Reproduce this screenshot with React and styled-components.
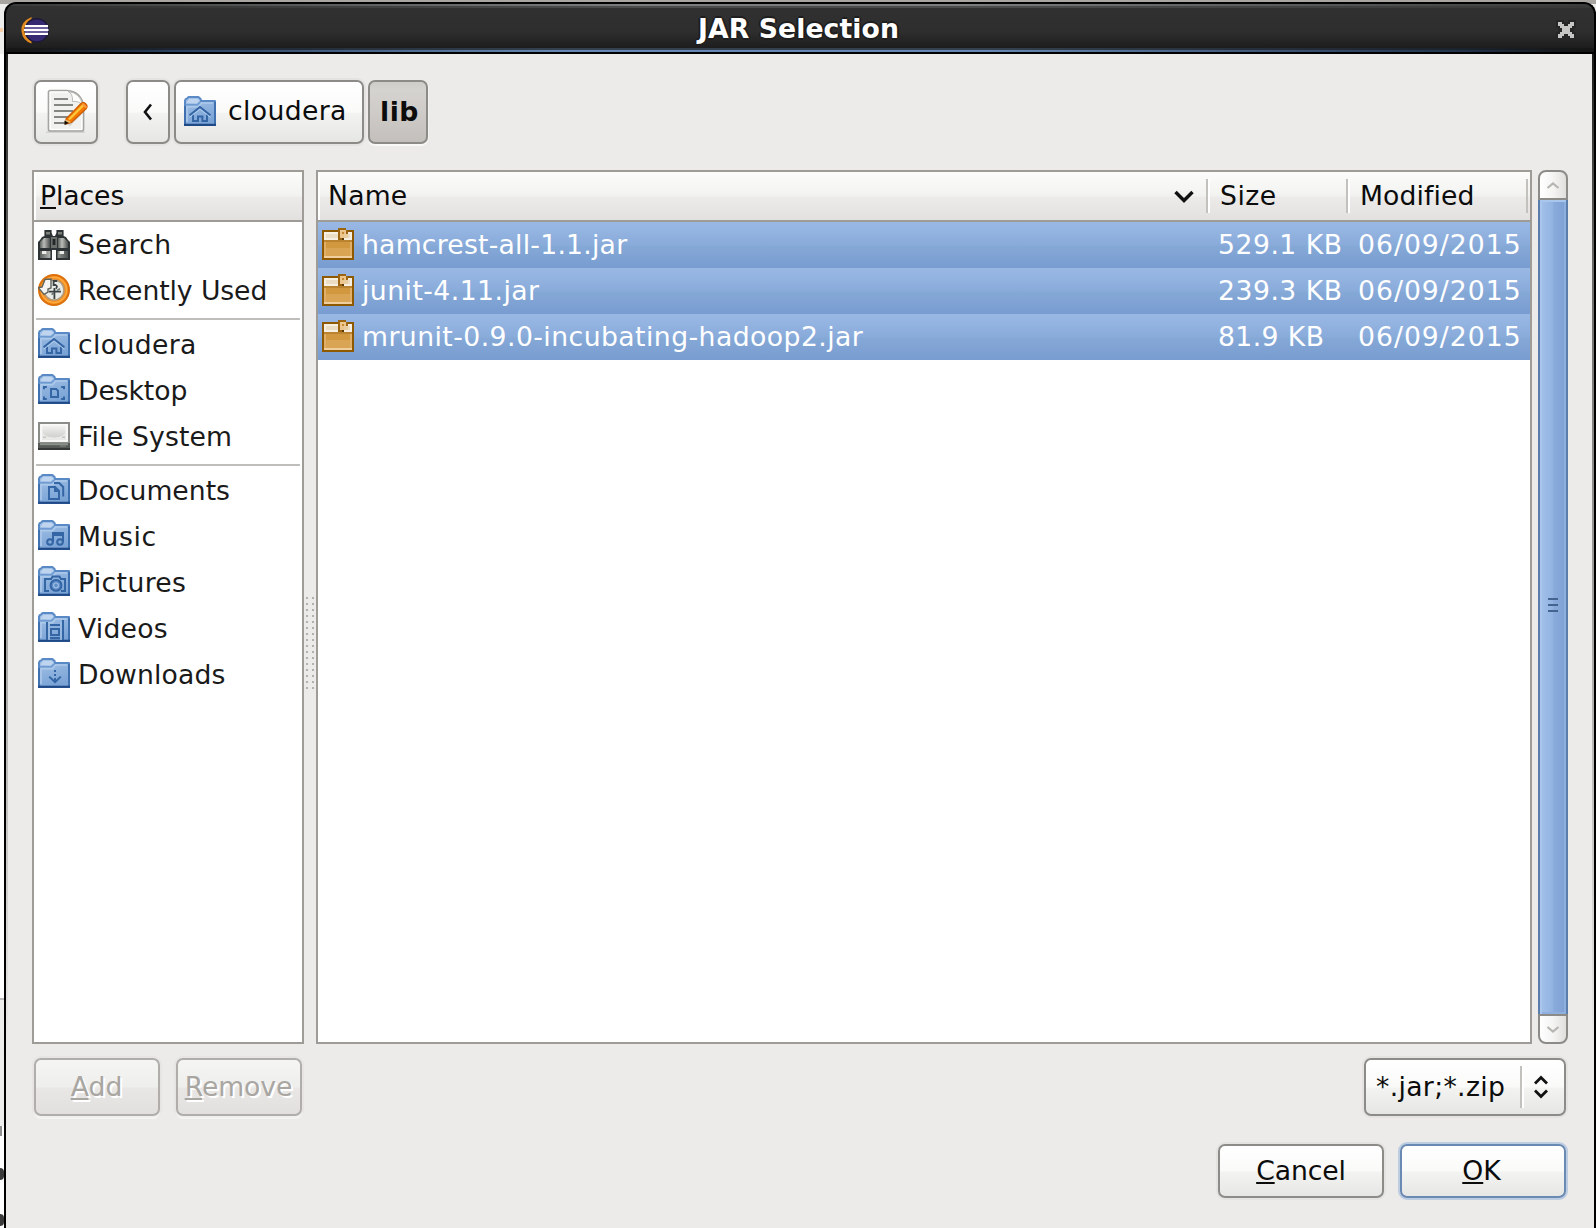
import React from 'react';
import styled, { createGlobalStyle, css } from 'styled-components';

const GlobalStyle = createGlobalStyle`
  * { box-sizing: border-box; }
  body { margin: 0; overflow: hidden; background: #fff; }
`;

const Screen = styled.div`
  display: flex;
  width: 1596px;
  height: 1228px;
  padding-top: 2px;
  overflow: hidden;
  font-family: "DejaVu Sans", sans-serif;
  font-size: 26.67px;
  color: #0c0c0c;
  background: linear-gradient(#a8a5a1 0 4px, #ededec 4px 54px, #fff 54px);
`;

/* sliver of the window behind the dialog */
const Behind = styled.div`
  flex: none;
  width: 4px;
  display: flex;
  flex-direction: column;
  align-items: flex-start;
  padding-top: 26px;
`;
const BehindMark = styled.div`
  width: ${p => p.$w || 4}px;
  height: ${p => p.$h}px;
  margin-top: ${p => p.$gap || 0}px;
  background: ${p => p.$color};
  border-top: ${p => (p.$line ? `2px solid ${p.$line}` : 'none')};
  border-radius: ${p => p.$r || '0'};
`;

const Dialog = styled.div`
  flex: 1;
  display: flex;
  flex-direction: column;
  border: solid #000;
  border-width: 2px 2px 0 2px;
  border-radius: 12px 12px 0 0;
  background: #000;
  overflow: hidden;
`;

const TitleBar = styled.header`
  flex: none;
  height: 50px;
  display: grid;
  grid-template-columns: 60px 1fr 60px;
  align-items: center;
  background:
    linear-gradient(90deg, #161616 1%, #2a3f5c 10%, #6788b4 35%, #6788b4 62%, #22324a 92%, #161616 99%) 0 46px / 100% 2px no-repeat,
    linear-gradient(90deg, #161616 1%, #1b2430 10%, #34404f 35%, #34404f 62%, #1a222c 92%, #161616 99%) 0 44px / 100% 2px no-repeat,
    linear-gradient(#000, #000) 0 48px / 100% 2px no-repeat,
    linear-gradient(90deg, #3a3a3a, #7b7d7e 40%, #7b7d7e 60%, #3a3a3a) 0 0 / 100% 2px no-repeat,
    linear-gradient(90deg, #303030, #4b4c4c 40%, #4b4c4c 60%, #383838) 0 2px / 100% 2px no-repeat,
    linear-gradient(#313131 0, #2e2e2e 55%, #171717 100%);
`;
const TitleText = styled.h1`
  margin: 0;
  padding: 0 3px 1px 0;
  font-size: 26.67px;
  line-height: 40px;
  font-weight: bold;
  letter-spacing: 0.1px;
  text-align: center;
  color: #fff;
  text-shadow: 2px 0 #1e1e1e, -2px 0 #1e1e1e, 0 2px #1e1e1e, 0 -2px #1e1e1e;
`;
const TitleIcon = styled.span`
  display: flex;
  padding-left: 14px;
  margin-top: 3px;
`;
const CloseButton = styled.button`
  display: flex;
  border: 0;
  padding: 0;
  background: none;
  margin: 2px 0 0 22px;
`;

const Body = styled.main`
  flex: 1;
  display: flex;
  flex-direction: column;
  padding: 26px 26px 0;
  background:
    linear-gradient(#1c1c1b, #6b6a69 18%, #a9a8a6 50%, #ecebe9 85%) 0 0 / 2px 100% no-repeat,
    linear-gradient(#1c1c1b, #6b6a69 18%, #a9a8a6 50%, #ecebe9 85%) 100% 0 / 2px 100% no-repeat,
    #ecebe9;
`;

const Toolbar = styled.nav`
  display: flex;
  height: 64px;
  padding-left: 2px;
  gap: 28px;
`;
const PathBar = styled.div`
  display: flex;
  gap: 4px;
`;

const Button = styled.button`
  flex: none;
  display: flex;
  align-items: center;
  justify-content: ${p => (p.$start ? 'flex-start' : 'center')};
  width: ${p => p.$w}px;
  height: ${p => p.$h || 64}px;
  padding: 0 ${p => (p.$start ? 8 : 0)}px;
  border: 2px solid #8c8b88;
  border-radius: 7px;
  font: inherit;
  color: #0c0c0c;
  background: linear-gradient(#ffffff, #fafaf9 50%, #f3f3f1 52%, #e6e6e4);
  box-shadow: 0 0 0 2px rgba(0, 0, 0, 0.03);
  ${p => p.$pressed && css`
    font-weight: bold;
    background: linear-gradient(#cfcdca, #d5d3d0 14%, #cecbc8 50%, #c3c0bc);
    box-shadow: 0 2px 0 #f8f8f7, 1px 0 0 #f4f4f3;
  `}
  ${p => p.$default && css`
    padding-right: 3px;
    border-color: #6a8ab4;
    box-shadow: 0 0 0 2px #bccde2;
  `}
  &:disabled {
    padding-right: 1px;
    color: #a9a6a2;
    border-color: #b0adaa;
    background: linear-gradient(#f5f5f4, #eeeeed 50%, #e8e7e6 52%, #e1e0de);
    box-shadow: 0 0 0 2px rgba(0, 0, 0, 0.025), 0 3px 0 #f6f6f5;
    text-shadow: 2px 2px 0 #fff;
  }
`;

const Label = styled.span`
  line-height: 32px;
  white-space: pre;
  letter-spacing: ${p => p.$ls || 0}px;
  margin-left: ${p => p.$gap || 0}px;
  margin-top: ${p => p.$drop || 0}px;
`;
const Mnemonic = styled.span`
  text-decoration: underline;
  text-decoration-thickness: 2px;
  text-underline-offset: 2px;
  text-decoration-skip-ink: none;
`;

const Panels = styled.div`
  display: grid;
  grid-template-columns: 272px 12px 1216px 6px 30px;
  height: 874px;
  margin-top: 26px;
`;
const Panel = styled.section`
  border: 2px solid #9f9c98;
  background: #fff;
  overflow: hidden;
`;
const headerFill = css`
  height: 50px;
  border-bottom: 2px solid #9f9c98;
  background:
    linear-gradient(#fff, #fff) 0 0 / 2px 100% no-repeat,
    linear-gradient(#fcfdfb, #f2f2f1 50%, #ecebea 52%, #e2e1df);
`;
const PlacesHeader = styled.div`
  ${headerFill}
  display: flex;
  align-items: center;
  padding-left: 6px;
`;
const PlaceRow = styled.div`
  display: flex;
  align-items: flex-start;
  height: 46px;
  padding: 6px 0 0 4px;
  color: #1a1a1a;
`;
const Separator = styled.hr`
  height: 8px;
  margin: 0 2px;
  border: 0;
  background: linear-gradient(transparent 4px, #bfbeba 4px 6px, transparent 6px);
`;

const Splitter = styled.div`
  align-self: center;
  justify-self: center;
  width: 8px;
  height: 96px;
  margin: 0 0 -76px 0;
  background:
    conic-gradient(from 0deg at 2px 2px, transparent 75%, #b3b1ae 0) 0 0 / 6px 6px;
`;

const columns = css`
  display: grid;
  grid-template-columns: 890px 140px 180px;
`;
const ListHeader = styled.div`
  ${headerFill}
  ${columns}
  align-items: center;
`;
const HeaderCell = styled.div`
  display: flex;
  align-items: center;
  justify-content: space-between;
  height: 34px;
  padding: 0 12px 0 ${p => p.$pad}px;
  border-right: 2px solid #c3c1be;
  border-left: ${p => (p.$first ? 'none' : '2px solid #fff')};
`;
const FileRow = styled.div`
  ${columns}
  height: 46px;
  color: #fff;
  background: linear-gradient(#9ab8e4, #8aacdb 48%, #84a8d6 54%, #799cd1);
`;
const FileCell = styled.div`
  display: flex;
  align-items: flex-start;
  padding: 6px 0 0 ${p => p.$pad}px;
`;

const ScrollBar = styled.div`
  grid-column: 5;
  display: flex;
  flex-direction: column;
`;
const Stepper = styled.button`
  flex: none;
  display: flex;
  align-items: center;
  justify-content: center;
  height: 30px;
  padding: 0;
  border: 2px solid #8c8b88;
  border-radius: ${p => (p.$down ? '0 0 8px 8px' : '8px 8px 0 0')};
  background: linear-gradient(90deg, #fff, #f4f4f3 50%, #e0dfdd);
`;
const Thumb = styled.div`
  flex: 1;
  display: flex;
  flex-direction: column;
  align-items: center;
  justify-content: center;
  gap: 4px;
  padding-bottom: 4px;
  border: solid #5b7dac;
  border-width: 0 2px;
  box-shadow: inset 2px 2px 0 #a9c6ec, inset -2px -2px 0 #8fb0de;
  background: linear-gradient(90deg, #a3c1ea, #92b3e1 50%, #8aacdc 52%, #7d9fd2);
`;
const ThumbLine = styled.i`
  width: 10px;
  height: 2px;
  background: #44638f;
`;

const Controls = styled.div`
  display: flex;
  justify-content: space-between;
  height: 58px;
  margin-top: 14px;
  padding: 0 2px;
`;
const Pair = styled.div`
  display: flex;
  gap: 16px;
`;
const Combo = styled(Button)`
  justify-content: flex-start;
  padding: 0 0 0 10px;
`;
const ComboArrows = styled.span`
  display: flex;
  align-items: center;
  height: 42px;
  margin-left: auto;
  padding: 0 16px 0 12px;
  border-left: 2px solid #c3c1be;
  box-shadow: inset 2px 0 0 #fff;
`;
const Actions = styled.footer`
  display: flex;
  justify-content: flex-end;
  gap: 16px;
  margin-top: 28px;
  padding-right: 2px;
`;
const Glyph = styled.svg`
  flex: none;
  display: block;
`;

const ink = '#3465a4';
const emblems = {
  home: (
    <g fill="none" stroke={ink} strokeWidth="1">
      <path d="M4.500 9.200v3.300H7v-2.200h2.200v2.200h2.300V9.200" />
      <path d="M2.800 9.600 8 5.500l5.200 4.100" />
      <path d="M2.800 10.600 8 6.600l5.200 4" stroke="#b3cdec" strokeWidth=".5" />
    </g>
  ),
  desktop: (
    <g fill="none" stroke={ink} strokeWidth="1">
      <path d="M6.500 7.500h2.600l.9.900v3.100H6.500z" />
      <path d="M3 7.600V6.500h1.400M11.600 6.500H13v1.100M3 11.200v1.300h1.400M11.600 12.500H13v-1.300" />
    </g>
  ),
  documents: (
    <g fill="none" stroke={ink} strokeWidth="1">
      <path d="M5.500 6.500h3l2 2v4h-5z" />
      <path d="M8.500 6.200v2.300h2M8 4.500h2.600l2 2v4.800" />
    </g>
  ),
  music: (
    <g fill="none" stroke={ink} strokeWidth="1">
      <path d="M7.500 11V6.500h5V11M7.500 7.500h5" />
      <circle cx="6" cy="11" r="1.400" />
      <circle cx="11" cy="11" r="1.400" />
    </g>
  ),
  pictures: (
    <g fill="none" stroke={ink} strokeWidth="1">
      <path d="M5.500 12.500h-2v-6h3l.8-1.200h3.400l.8 1.200h2v6h-2" />
      <circle cx="9" cy="9.700" r="2.700" fill="#5f8dc8" />
      <circle cx="9" cy="9.700" r="1.200" stroke="#9dbde5" strokeWidth=".6" />
    </g>
  ),
  videos: (
    <g fill="none" stroke={ink} strokeWidth="1">
      <path d="M4.500 5v9M12.500 4v10M6 6.500h5M6.500 8.500h4v3h-4zM6 13h5" />
      <path d="M5.500 5v9M11.500 5v9" stroke="#a5c3e7" strokeWidth=".6" />
    </g>
  ),
  downloads: (
    <g fill="none" stroke={ink} strokeWidth="1">
      <path d="M8.500 6v4" strokeDasharray="1 1" />
      <path d="M5.600 9.300l2.900 2.800 2.900-2.800M8.500 10v2" />
    </g>
  ),
};

const FolderIcon = ({ kind }) => (
  <Glyph width="32" height="32" viewBox="0 0 16 16">
    <defs>
      <linearGradient id={`fold-${kind}`} x1="0" y1="0" x2="0.3" y2="1">
        <stop offset="0" stopColor="#a9c6e9" />
        <stop offset="0.500" stopColor="#8fb3de" />
        <stop offset="1" stopColor="#7ba4d6" />
      </linearGradient>
    </defs>
    <path d="M.5 5V2.300Q.6 1.500 1.500 1.300L2.300.5H7.200L8.300 1.500 8.500 2.500H15.500V14.500H.5z" fill={`url(#fold-${kind})`} stroke="#5a8ac6" strokeLinejoin="round" />
    <path d="M1.300 3.500 2.500 1.500h4.300l1 .7-1.500 1.500z" fill="#bfd4ee" />
    <path d="M1 4.400h5.600L8.200 3" stroke="#6f9bd2" strokeWidth=".8" fill="none" />
    <path d="M1.500 13V5.400h5.800l1.500-1.900h5.700" stroke="#adc9ea" fill="none" strokeWidth=".8" />
    <path d="M.5 5v9M15.500 3v11" stroke="#3f70b0" />
    <path d="M0 14.400h16" stroke="#204a87" strokeWidth="1.100" />
    {emblems[kind]}
  </Glyph>
);

const BinocularsIcon = () => (
  <Glyph width="32" height="32" viewBox="0 0 16 16">
    <defs>
      <linearGradient id="barrel" x1="0" x2="1">
        <stop offset="0" stopColor="#5d615e" />
        <stop offset=".4" stopColor="#babcb8" />
        <stop offset="1" stopColor="#4b4f4d" />
      </linearGradient>
    </defs>
    <path d="M3.200 1h3.600v1.500L7.500 4h1l.7-1.500V1h3.600v3l1.200.5 1 1.500 1 1v9H9v-5H7v5H0V7l1-1 1-1.500L3.200 4z" fill="#2e3436" />
    <path d="M1 7 3 5h3v5H1z" fill="url(#barrel)" />
    <path d="M10 5h3l2 2v3h-5z" fill="url(#barrel)" />
    <path d="M6.500 4.500h3V10h-3z" fill="#6b706c" />
    <path d="M7.300 5.500h1.400v3H7.300z" fill="#232829" />
    <path d="M4 2h2v1.200H4zM10 2h2v1.200h-2z" fill="#7c807b" />
    <path d="M1 11.500h5.200V15H1zM9.800 11.500H15V15H9.800z" fill="url(#barrel)" />
    <path d="M2 11.500h2.200V13H2zM10.800 11.500H13V13h-2.200z" fill="#ecedea" />
    <path d="M7 11.500h2V16H7z" fill="#fff" />
  </Glyph>
);

const RecentIcon = () => (
  <Glyph width="32" height="32" viewBox="0 0 16 16">
    <circle cx="8" cy="8" r="7.500" fill="#f58c16" stroke="#dc700d" />
    <circle cx="8" cy="8" r="6.300" fill="none" stroke="#fca83f" strokeWidth=".8" />
    <circle cx="8" cy="8" r="5" fill="#e9ebe7" stroke="#b39a7c" strokeWidth=".8" />
    <path d="M3.500 2.700 6.500 2.500V7L5 7.500V9L3 10.200.2 6.800l1.800-.3z" fill="#f4f5f2" stroke="#5f635d" strokeWidth=".7" />
    <path d="M9.600 3.500H7.800v2h1q1.200.5.200 1.800M8.200 7v5.500M5.500 8.800h6" stroke="#3b4042" strokeWidth=".9" fill="none" />
    <path d="M9.500 8.300l1.500-1M6.800 10.300l1.200-1" stroke="#6c706c" strokeWidth=".8" fill="none" />
  </Glyph>
);

const DriveIcon = () => (
  <Glyph width="32" height="32" viewBox="0 0 16 16">
    <defs>
      <linearGradient id="plate" x1="0" y1="0" x2="0" y2="1">
        <stop offset="0" stopColor="#f0f0ef" />
        <stop offset="1" stopColor="#e6e6e4" />
      </linearGradient>
      <linearGradient id="disc" x1="0" y1="0" x2="0" y2="1">
        <stop offset="0" stopColor="#f2f2f1" />
        <stop offset="1" stopColor="#cfd1cc" />
      </linearGradient>
    </defs>
    <path d="M.5 1.500h15v10H.5z" fill="url(#plate)" stroke="#8b8d88" />
    <path d="M1.500 2.500h13v8h-13z" fill="none" stroke="#fbfbfa" strokeWidth=".8" />
    <path d="M2.300 6C2.500 3.500 4 2.800 8 2.800s5.500.7 5.700 3.200C13 9.600 3 9.600 2.300 6z" fill="url(#disc)" />
    <path d="M2.500 8.600h1.500M12 8.600h1.500" stroke="#c3c5c0" strokeWidth=".8" />
    <path d="M0 11.500h16V15H0z" fill="#555a57" />
    <path d="M1 11.600h14v1H1z" fill="#8d918c" />
    <path d="M0 14h16v1H0z" fill="#333836" />
    <path d="M11 12.500h3v1h-3z" fill="#6f7470" />
  </Glyph>
);

const JarIcon = () => (
  <Glyph width="32" height="32" viewBox="0 0 16 16" shapeRendering="crispEdges">
    <path d="M0 1h16v15H0z" fill="#8f5902" />
    <path d="M1 2h14v13H1z" fill="#f0cf9f" />
    <path d="M1 2h14v4H1z" fill="#f7efe2" />
    <path d="M2 3h12v2H2z" fill="#ebdcc4" />
    <path d="M2 6h12v8H2z" fill="#d1983f" />
    <path d="M1 6h14v1H1z" fill="#b9832f" />
    <path d="M2 10h12v4H2z" fill="#daa455" />
    <path d="M1 7h1v7H1zM14 7h1v7h-1z" fill="#e0b06a" />
    <path d="M8 0h4v1h1v2h-1v2h-1v1H8z" fill="#9c6511" />
    <path d="M9 1h3v2h-1v2H9z" fill="#ecc68c" />
    <path d="M10 2h1v1h-1z" fill="#c48a35" />
    <path d="M11 3h2v2h-2z" fill="#e8cda0" />
    <path d="M10 5h1v1h-1z" fill="#5c3a05" />
  </Glyph>
);

const EditIcon = () => (
  <Glyph width="48" height="48" viewBox="0 0 48 48">
    <path d="M4 43.500h39V45H4z" fill="#000" opacity=".1" />
    <path d="M6.500 4.500Q6.500 2.500 8.500 2.500H25q13.500 1 16.500 14.500v24q0 2-2 2h-31q-2 0-2-2z" fill="#f1f1ef" stroke="#a3a5a1" strokeWidth="1.700" />
    <path d="M8.200 4.200H25q12 1 14.800 13v24.200H8.200z" fill="none" stroke="#fff" strokeWidth="1.300" />
    <path d="M26 3.500q5 2 4.500 10 7-.5 10 3.500-2-12-14.500-13.500z" fill="#fdfdfc" stroke="#bcbdb9" />
    <path d="M12 11h14M12 17h19M12 23h19M12 29h14M12 35h11" stroke="#858782" strokeWidth="2" />
    <path d="M26 36.500l16-16" stroke="#000" opacity=".12" strokeWidth="5" />
    <path d="M24 31 39 15.500q2.500-2 4.800.3t.5 4.700L29.500 34.500 24 36z" fill="#f57900" stroke="#ce5c00" strokeWidth="1.200" />
    <path d="M27 31.500 41 17.500" stroke="#fcc83a" strokeWidth="2.400" />
    <path d="M40.500 15.700l4 4" stroke="#f99b45" strokeWidth="1.800" />
    <path d="M23.800 31.500 29 34l-5.500 2.500z" fill="#e9b96e" />
    <path d="M22.500 32.500l4.500 2.500-4.500 2z" fill="#1a0d00" />
  </Glyph>
);

const EclipseIcon = () => (
  <Glyph width="30" height="28" viewBox="0 0 30 28">
    <path d="M11.500 0Q0 5 1.500 14.500 2.500 23.500 11.500 26.500V24Q4.500 20 4.500 13.300T11.500 2z" fill="#e08a20" />
    <circle cx="16.800" cy="13.300" r="12.300" fill="#1c1938" />
    <circle cx="16.800" cy="13.300" r="10.900" fill="#352a72" />
    <path d="M5 8h23v2H5zM4 12h24.500v2H4zM5 16h23v2H5z" fill="#fff" />
    <path d="M5 10h23v2H5zM5 14h23v2H5z" fill="#6a5f9a" />
  </Glyph>
);

const CloseIcon = () => (
  <Glyph width="20" height="20" viewBox="0 0 10 10" shapeRendering="crispEdges">
    <path d="M0 0h4v1h2V0h4v4H9v2h1v4H6V9H4v1H0V6h1V4H0z" fill="#262626" />
    <path d="M1 1h2v1h1v1h2V2h1V1h2v2H8v1H7v2h1v1h1v2H7V8H6V7H4v1H3v1H1V7h1V6h1V4H2V3H1z" fill="#c6c6c5" />
  </Glyph>
);

const Chevron = ({ w, h, up, color = '#111', stroke = 3 }) => (
  <Glyph width={w} height={h} viewBox={`0 0 ${w} ${h}`}>
    <path
      d={up ? `M1.500 ${h - 2}L${w / 2} 2.500 ${w - 1.5} ${h - 2}` : `M1.500 2L${w / 2} ${h - 2.5} ${w - 1.5} 2`}
      fill="none" stroke={color} strokeWidth={stroke}
    />
  </Glyph>
);

const places = [
  { name: 'Search', icon: <BinocularsIcon />, ls: 0.3 },
  { name: 'Recently Used', icon: <RecentIcon />, ls: -0.1 },
  null,
  { name: 'cloudera', icon: <FolderIcon kind="home" />, ls: 0.35 },
  { name: 'Desktop', icon: <FolderIcon kind="desktop" />, ls: -0.1 },
  { name: 'File System', icon: <DriveIcon />, ls: 0.16 },
  null,
  { name: 'Documents', icon: <FolderIcon kind="documents" />, ls: 0 },
  { name: 'Music', icon: <FolderIcon kind="music" />, ls: 0.6 },
  { name: 'Pictures', icon: <FolderIcon kind="pictures" />, ls: 0.35 },
  { name: 'Videos', icon: <FolderIcon kind="videos" />, ls: 0.2 },
  { name: 'Downloads', icon: <FolderIcon kind="downloads" />, ls: 0.12 },
];

const files = [
  { name: 'hamcrest-all-1.1.jar', ls: 0.22, size: '529.1 KB', sizeLs: 0.5, date: '06/09/2015' },
  { name: 'junit-4.11.jar', ls: 0.45, size: '239.3 KB', sizeLs: 0.5, date: '06/09/2015' },
  { name: 'mrunit-0.9.0-incubating-hadoop2.jar', ls: 0.44, size: '81.9 KB', sizeLs: 0.4, date: '06/09/2015' },
];

const Accel = ({ text, ls }) => (
  <Label $ls={ls}><Mnemonic>{text[0]}</Mnemonic>{text.slice(1)}</Label>
);

export default function App() {
  return (
    <Screen>
      <GlobalStyle />
      <Behind>
        <BehindMark $h={4} $w={3} $color="#f6cfa8" />
        <BehindMark $gap={966} $h={128} $color="#ededec" $line="#bdbcba" />
        <BehindMark $h={10} $w={2} $color="#8f8f8f" $line="#8f8f8f" />
        <BehindMark $gap={32} $h={12} $color="#3a3a3a" $r="0 4px 4px 0" />
        <BehindMark $gap={34} $h={12} $color="#3a3a3a" $r="0 4px 4px 0" />
      </Behind>
      <Dialog>
        <TitleBar>
          <TitleIcon><EclipseIcon /></TitleIcon>
          <TitleText>JAR Selection</TitleText>
          <CloseButton aria-label="Close"><CloseIcon /></CloseButton>
        </TitleBar>
        <Body>
          <Toolbar>
            <Button $w={64} aria-label="Type a file name"><EditIcon /></Button>
            <PathBar>
              <Button $w={44} aria-label="Back">
                <Glyph width="12" height="18" viewBox="0 0 12 18">
                  <path d="M9 1.500 3 9l6 7.500" fill="none" stroke="#111" strokeWidth="2.600" />
                </Glyph>
              </Button>
              <Button $w={190} $start>
                <FolderIcon kind="home" />
                <Label $gap={12} $ls={0.35} $drop={-3}>cloudera</Label>
              </Button>
              <Button $w={60} $pressed><Label $ls={0.5} $gap={3}>lib</Label></Button>
            </PathBar>
          </Toolbar>
          <Panels>
            <Panel>
              <PlacesHeader><Accel text="Places" ls={-0.1} /></PlacesHeader>
              {places.map((p, i) => (p ? (
                <PlaceRow key={p.name}>
                  {p.icon}
                  <Label $gap={8} $drop={1} $ls={p.ls}>{p.name}</Label>
                </PlaceRow>
              ) : <Separator key={`sep${i}`} />))}
            </Panel>
            <Splitter />
            <Panel>
              <ListHeader>
                <HeaderCell $first $pad={10}>
                  <Label $ls={0.2}>Name</Label>
                  <Chevron w={20} h={13} stroke={3.4} />
                </HeaderCell>
                <HeaderCell $pad={10}><Label $ls={0.5}>Size</Label></HeaderCell>
                <HeaderCell $pad={10}><Label $ls={0.1}>Modified</Label></HeaderCell>
              </ListHeader>
              {files.map(f => (
                <FileRow key={f.name}>
                  <FileCell $pad={4}>
                    <JarIcon />
                    <Label $gap={8} $drop={1} $ls={f.ls}>{f.name}</Label>
                  </FileCell>
                  <FileCell $pad={10}><Label $drop={1} $ls={f.sizeLs}>{f.size}</Label></FileCell>
                  <FileCell $pad={10}><Label $drop={1} $ls={1}>{f.date}</Label></FileCell>
                </FileRow>
              ))}
            </Panel>
            <ScrollBar>
              <Stepper aria-label="Scroll up"><Chevron w={14} h={9} up color="#b7b5b1" stroke={2.2} /></Stepper>
              <Thumb><ThumbLine /><ThumbLine /><ThumbLine /></Thumb>
              <Stepper $down aria-label="Scroll down"><Chevron w={14} h={9} color="#b7b5b1" stroke={2.2} /></Stepper>
            </ScrollBar>
          </Panels>
          <Controls>
            <Pair>
              <Button $w={126} $h={58} disabled><Accel text="Add" /></Button>
              <Button $w={126} $h={58} disabled><Accel text="Remove" ls={-0.1} /></Button>
            </Pair>
            <Combo $w={202} $h={58}>
              <Label $ls={0.33}>*.jar;*.zip</Label>
              <ComboArrows>
                <Glyph width="14" height="24" viewBox="0 0 14 24">
                  <path d="M1 8.500 7 2.500l6 6M1 15.500l6 6 6-6" fill="none" stroke="#111" strokeWidth="2.800" />
                </Glyph>
              </ComboArrows>
            </Combo>
          </Controls>
          <Actions>
            <Button $w={166} $h={54}><Accel text="Cancel" ls={-0.1} /></Button>
            <Button $w={166} $h={54} $default><Accel text="OK" /></Button>
          </Actions>
        </Body>
      </Dialog>
    </Screen>
  );
}
